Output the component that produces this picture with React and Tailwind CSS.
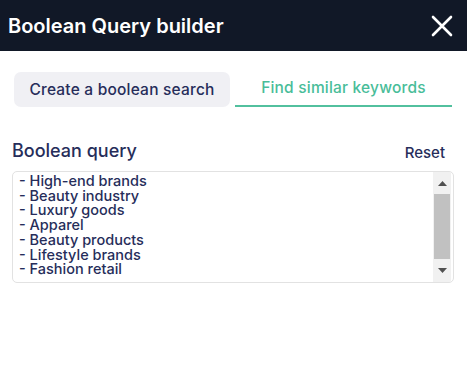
import React from "react";

const keywords = [
  "High-end brands",
  "Beauty industry",
  "Luxury goods",
  "Apparel",
  "Beauty products",
  "Lifestyle brands",
  "Fashion retail",
];

const CloseIcon = () => (
  <svg width="22" height="22" viewBox="0 0 22 22" fill="none">
    <path d="M2 2 L20 20 M20 2 L2 20" stroke="white" strokeWidth="2.6" strokeLinecap="round" />
  </svg>
);

export default function App() {
  return (
    <div className="w-[467px] h-[371px] bg-white font-['Inter',sans-serif] text-[#262d5a]">
      {/* header */}
      <div className="h-[51px] bg-[#111827] flex items-center justify-between pl-2 pr-[14px]">
        <h1 className="text-white text-[20px] font-semibold">Boolean Query builder</h1>
        <button className="flex items-center justify-center">
          <CloseIcon />
        </button>
      </div>

      {/* tabs */}
      <div className="flex items-end pl-[14px] pr-[15px] mt-[20px] gap-[5px]">
        <button className="w-[216px] h-[35px] rounded-[7px] bg-[#f0f0f4] text-[15.5px] tracking-[0.2px] font-medium text-[#262d5a]">
          Create a boolean search
        </button>
        <div className="flex-1 flex flex-col">
          <button className="h-[34px] text-[15.5px] tracking-[0.2px] font-medium text-[#49bd99]">
            Find similar keywords
          </button>
          <div className="h-[2px] bg-[#52c09e]" />
        </div>
      </div>

      {/* query */}
      <div className="px-3 mt-[35px]">
        <div className="flex items-end justify-between pr-[10px]">
          <span className="text-[18px] font-medium leading-none">Boolean query</span>
          <button className="text-[15px] font-medium leading-none">Reset</button>
        </div>
        <div className="mt-[11px] w-[442px] h-[112px] border border-[#e2e2e2] rounded-[5px] flex overflow-hidden">
          <div className="flex-1 pl-[6px] pt-[2px] text-[14.5px] leading-[14.7px] font-medium">
            {keywords.map((k) => (
              <div key={k}>- {k}</div>
            ))}
          </div>
          <div className="w-[18px] mr-[2px] bg-[#f1f1f1] flex flex-col items-center">
            <div className="h-[22px] flex items-center justify-center">
              <svg width="9" height="5" viewBox="0 0 9 5"><path d="M0 5 L4.5 0 L9 5 Z" fill="#505050" /></svg>
            </div>
            <div className="w-[16px] h-[65px] bg-[#c1c1c1]" />
            <div className="flex-1 flex items-center justify-center">
              <svg width="9" height="5" viewBox="0 0 9 5"><path d="M0 0 L4.5 5 L9 0 Z" fill="#505050" /></svg>
            </div>
          </div>
        </div>
      </div>
    </div>
  );
}
